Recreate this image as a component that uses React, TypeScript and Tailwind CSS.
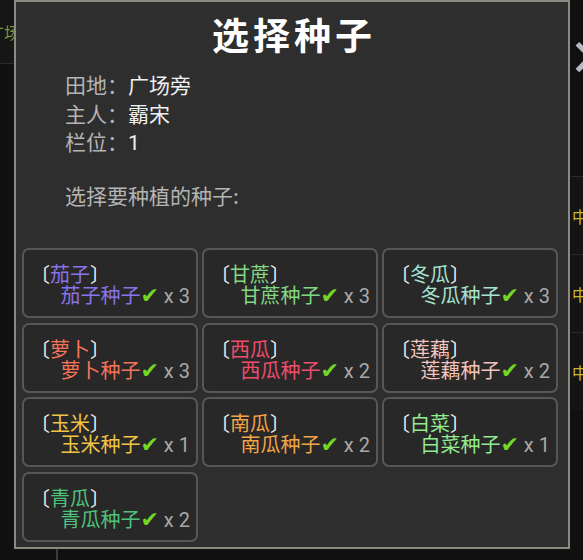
import React from "react";

type Seed = {
  crop: string;
  color: string;
  count: number;
};

const seeds: Seed[] = [
  { crop: "茄子", color: "#8a72e8", count: 3 },
  { crop: "甘蔗", color: "#82d882", count: 3 },
  { crop: "冬瓜", color: "#a6e3d2", count: 3 },
  { crop: "萝卜", color: "#f7745a", count: 3 },
  { crop: "西瓜", color: "#ee4d6c", count: 2 },
  { crop: "莲藕", color: "#f2c4bc", count: 2 },
  { crop: "玉米", color: "#f3c444", count: 1 },
  { crop: "南瓜", color: "#f3a446", count: 2 },
  { crop: "白菜", color: "#92ec8e", count: 1 },
  { crop: "青瓜", color: "#4fc27c", count: 2 },
];

const font = { fontFamily: '"Noto Sans CJK SC", "Noto Sans", Roboto, sans-serif' };

function SeedCard({ seed }: { seed: Seed }) {
  return (
    <button
      type="button"
      className="flex h-[70px] flex-col justify-center rounded-[7px] border-2 border-[#575757] bg-[#282828] px-[6px] pt-[4px] text-[20px] leading-[21px]"
    >
      <div className="text-left text-[#f2f2f2]">
        〔<span style={{ color: seed.color }}>{seed.crop}</span>〕
      </div>
      <div className="whitespace-nowrap text-right">
        <span style={{ color: seed.color }}>{seed.crop}种子</span>
        <span
          className="text-[22px] leading-[21px] text-[#72d622]"
          style={{ fontFamily: '"DejaVu Sans", sans-serif' }}
        >
          ✔
        </span>
        <span className="text-[#a8a8a8]" style={{ fontFamily: "Roboto, sans-serif" }}>
          {" "}x {seed.count}
        </span>
      </div>
    </button>
  );
}

export default function App() {
  return (
    <div className="relative h-[560px] w-[583px] overflow-hidden bg-[#101010]" style={font}>
      {/* game page behind the dialog */}
      <div className="absolute left-0 top-0 h-[64px] w-[14px] border-b border-[#2a2a2a] bg-[#161616]">
        <span className="absolute right-[-6px] top-[20px] whitespace-nowrap text-[16px] text-[#7a9a3a]">广场</span>
      </div>
      <div className="absolute right-0 top-[24px] flex h-[60px] w-[12px] items-center justify-start text-[52px] leading-none text-[#b8b8c4]">
        <span className="ml-[-2px]">✕</span>
      </div>
      <div className="absolute right-0 top-[176px] flex w-[12px] flex-col">
        {[0, 1, 2].map((i) => (
          <div key={i} className="flex h-[78px] items-center border-t border-[#2a2a2a] bg-[#141414] text-[16px] text-[#c8b830]">
            <span className="ml-[1px]">中</span>
          </div>
        ))}
      </div>
      <div className="absolute bottom-0 left-[56px] h-[12px] w-[2px] bg-[#3a3a3a]" />

      {/* dialog */}
      <div className="absolute left-[14px] top-0 h-[549px] w-[556px] border-2 border-[#8b8a80] bg-[#2e2e2e]">
        <h1 className="pt-[8px] pl-[4px] text-center text-[37px] font-bold leading-[48px] tracking-[4px] text-white">
          选择种子
        </h1>
        <div className="mt-[12px] pl-[49px] text-[21px] leading-[28.5px]">
          <div>
            <span className="text-[#b4b4b4]">田地：</span>
            <span className="text-[#f0f0f0]">广场旁</span>
          </div>
          <div>
            <span className="text-[#b4b4b4]">主人：</span>
            <span className="text-[#f0f0f0]">霸宋</span>
          </div>
          <div>
            <span className="text-[#b4b4b4]">栏位：</span>
            <span className="text-[#f0f0f0]" style={{ fontFamily: "Roboto, sans-serif" }}>1</span>
          </div>
          <div className="mt-[23px] text-[#b4b4b4]">选择要种植的种子:</div>
        </div>
        <div className="ml-[6px] mt-[39px] grid w-[536px] grid-cols-3 gap-x-1 gap-y-[4.5px]">
          {seeds.map((s) => (
            <SeedCard key={s.crop} seed={s} />
          ))}
        </div>
      </div>
    </div>
  );
}
